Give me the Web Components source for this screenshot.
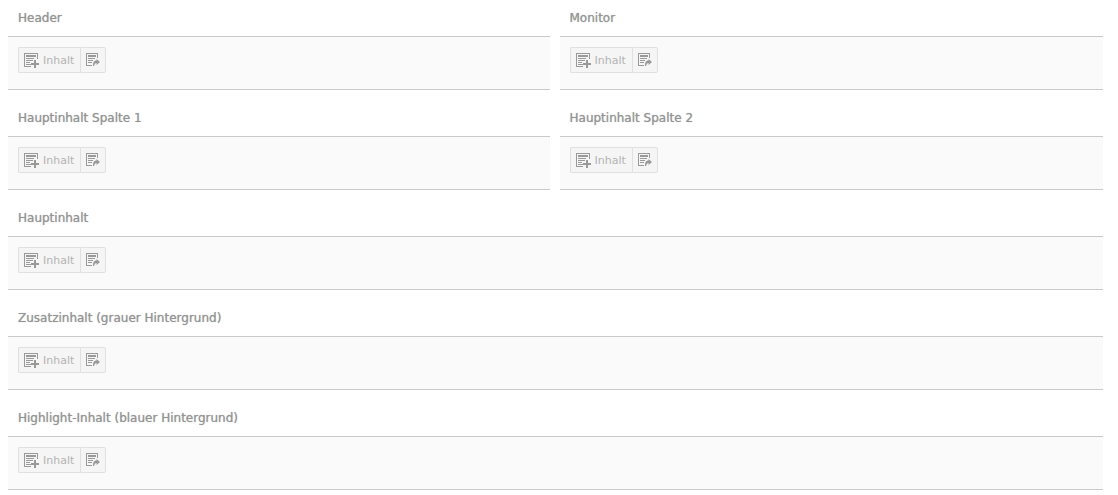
<!DOCTYPE html>
<html lang="de">
<head>
<meta charset="utf-8">
<title>Inhalt</title>
<style>
body { margin: 0; background: #fff; font-family: Verdana, "DejaVu Sans", sans-serif; }
</style>
</head>
<body>
<page-grid>
  <content-column>Header</content-column>
  <content-column>Monitor</content-column>
  <content-column>Hauptinhalt Spalte 1</content-column>
  <content-column>Hauptinhalt Spalte 2</content-column>
  <content-column wide>Hauptinhalt</content-column>
  <content-column wide>Zusatzinhalt (grauer Hintergrund)</content-column>
  <content-column wide>Highlight-Inhalt (blauer Hintergrund)</content-column>
</page-grid>

<template id="grid-template">
  <style>
    :host { display: grid; grid-template-columns: calc(50% - 6px) 1fr; gap: 10px; padding: 0 15px 5px 8px; }
  </style>
  <slot></slot>
</template>

<template id="column-template">
  <style>
    :host { display: block; min-width: 0; }
    :host([wide]) { grid-column: 1 / -1; }
    h2 { margin: 0; padding: 9px 10px; font-size: 12px; line-height: 18px; font-weight: 400; color: #949494; text-shadow: 0 0 1px #aaa; }
    .body { padding: 10px 10px 16px; background: #fafafa; border: solid #cacaca; border-width: 1px 0; }
  </style>
  <section>
    <h2><slot></slot></h2>
    <div class="body"><content-actions></content-actions></div>
  </section>
</template>

<template id="actions-template">
  <style>
    :host { display: flex; }
    button {
      display: flex; align-items: center; gap: 4px; box-sizing: border-box; height: 26px; margin: 0; padding: 0 0 0 5px;
      border: 1px solid #e0e0e0; background: #f5f5f5; color: #b3b3b3; font-family: inherit; font-size: 11px; line-height: 16px;
      cursor: pointer;
    }
    .add { min-width: 62px; border-radius: 2px 0 0 2px; border-right: 0; }
    .paste { width: 26px; border-radius: 0 2px 2px 0; }
    svg { display: block; flex: none; overflow: visible; fill: #999; }
    span { padding-top: 2px; }
  </style>
  <button type="button" class="add">
    <svg width="15" height="14" viewBox="0 0 15 14" shape-rendering="crispEdges" aria-hidden="true">
      <path d="M0 0h14v6h-1V1H1v12h6v1H0z"/>
      <path d="M2 2h10v2H2zM2 5h8v1H2zM2 7h7v1H2zM2 9h4v1H2zM2 11h5v1H2z"/>
      <path d="M10 7h2v3h3v2h-3v3h-2v-3H7v-2h3z"/>
    </svg>
    <span>Inhalt</span>
  </button>
  <button type="button" class="paste" aria-label="Einfügen">
    <svg width="14" height="14" viewBox="0 0 14 14" aria-hidden="true">
      <path shape-rendering="crispEdges" d="M0 0h12v5h-1V1H1v11h5v1H0z"/>
      <path shape-rendering="crispEdges" d="M2 2h8v2H2zM2 5h7v1H2zM2 7h5v1H2zM2 9h4v1H2z"/>
      <path d="M10.500 6L14 9l-3.500 3v-2C9 10 8.500 11.500 8 13H7c0-4 1-5.500 3.500-5.500z"/>
    </svg>
  </button>
</template>

<script>
const define = (name, id) => customElements.define(name, class extends HTMLElement {
  constructor() {
    super();
    this.attachShadow({ mode: "open" }).append(document.getElementById(id).content.cloneNode(true));
  }
});
define("content-actions", "actions-template");
define("content-column", "column-template");
define("page-grid", "grid-template");
</script>
</body>
</html>
